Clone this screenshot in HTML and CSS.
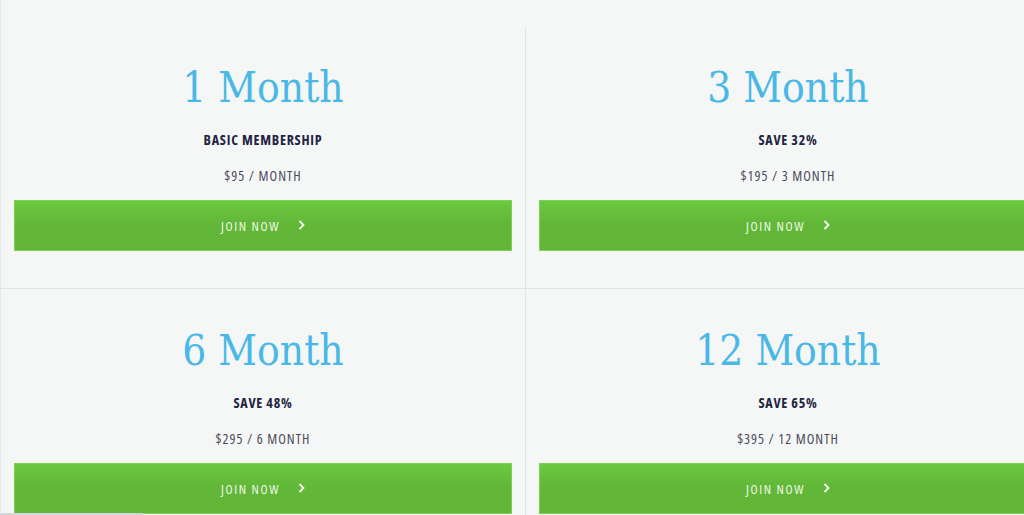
FILE: index.html
```html
<!DOCTYPE html>
<html lang="en">
<head>
    <meta charset="UTF-8">
    <meta name="viewport" content="width=device-width, initial-scale=1.0">
    <title>Membership Plans</title>
    <link rel="stylesheet" href="styles.css">
</head>
<body>
    <div class="plans">
        <div class="plan">
            <h2>1 Month</h2>
            <p class="plan-note">BASIC MEMBERSHIP</p>
            <p class="plan-price">$95 / MONTH</p>
            <a class="join" href="#">JOIN NOW <svg class="chev" width="7" height="10" viewBox="0 0 7 10"><polyline points="1.5,1 5.5,5 1.5,9"/></svg></a>
        </div>
        <div class="plan">
            <h2>3 Month</h2>
            <p class="plan-note">SAVE 32%</p>
            <p class="plan-price">$195 / 3 MONTH</p>
            <a class="join" href="#">JOIN NOW <svg class="chev" width="7" height="10" viewBox="0 0 7 10"><polyline points="1.5,1 5.5,5 1.5,9"/></svg></a>
        </div>
        <div class="plan">
            <h2>6 Month</h2>
            <p class="plan-note">SAVE 48%</p>
            <p class="plan-price">$295 / 6 MONTH</p>
            <a class="join" href="#">JOIN NOW <svg class="chev" width="7" height="10" viewBox="0 0 7 10"><polyline points="1.5,1 5.5,5 1.5,9"/></svg></a>
        </div>
        <div class="plan">
            <h2>12 Month</h2>
            <p class="plan-note">SAVE 65%</p>
            <p class="plan-price">$395 / 12 MONTH</p>
            <a class="join" href="#">JOIN NOW <svg class="chev" width="7" height="10" viewBox="0 0 7 10"><polyline points="1.5,1 5.5,5 1.5,9"/></svg></a>
        </div>
    </div>
    <div class="scroll-thumb"></div>
</body>
</html>
```

FILE: styles.css
```css
html { overflow: hidden; }
body {
    margin: 0;
    background: #f5f7f7;
    border-left: 1px solid #e6e8e8;
    font-family: "Open Sans", "DejaVu Sans", sans-serif;
    font-stretch: 75%;
    height: 515px;
}
.plans {
    display: grid;
    grid-template-columns: 525px 525px;
    padding-top: 26px;
    width: 1060px;
}
.plan {
    text-align: center;
    padding: 35px 13px 37px;
    border-right: 1px solid #e3e5e5;
    border-bottom: 1px solid #e3e5e5;
}
.plan h2 {
    margin: 0;
    font-family: "DejaVu Serif", serif;
    font-stretch: condensed;
    font-weight: normal;
    font-size: 42px;
    line-height: 54px;
    color: #4ab8e6;
}
.plan-note {
    margin: 15px 0 0;
    font-weight: bold;
    font-size: 14px;
    letter-spacing: 0.75px;
    color: #22243f;
}
.plan-price {
    margin: 17px 0 0;
    font-size: 14px;
    letter-spacing: 1px;
    color: #4a4a5a;
}
.join {
    display: flex;
    justify-content: center;
    align-items: center;
    gap: 18px;
    margin-top: 15px;
    height: 49px;
    border: 1px solid #78d452;
    background: linear-gradient(#6cc93f, #62b738 45%, #62b538);
    color: #eef8e6;
    text-decoration: none;
    font-size: 13px;
    letter-spacing: 1.6px;
}
.chev {
    fill: none;
    stroke: #f4fbef;
    stroke-width: 1.8;
    margin-top: -2px;
}
.scroll-thumb {
    position: fixed;
    left: 0;
    bottom: 0;
    width: 143px;
    height: 2px;
    background: #d6d8d8;
}
```
